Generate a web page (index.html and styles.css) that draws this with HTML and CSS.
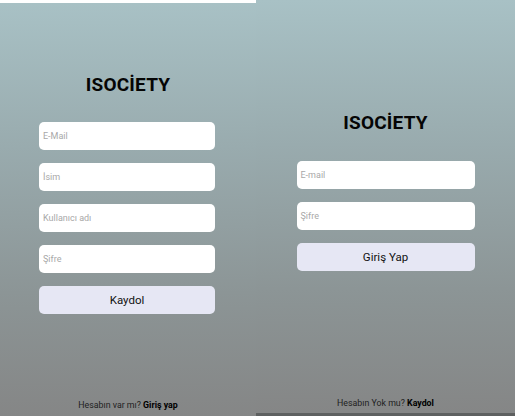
FILE: index.html
```html
<!DOCTYPE html>
<html>
<head>
<meta charset="utf-8">
<link rel="stylesheet" href="styles.css">
</head>
<body>
<div class="screens">
  <div class="col col-left">
    <div class="topbar"></div>
    <div class="panel panel-left">
      <h1 class="title">ISOCİETY</h1>
      <div class="form">
        <div class="field">E-Mail</div>
        <div class="field">İsim</div>
        <div class="field">Kullanıcı adı</div>
        <div class="field">Şifre</div>
        <div class="btn">Kaydol</div>
      </div>
      <div class="spacer"></div>
      <p class="footer">Hesabın var mı? <b>Giriş yap</b></p>
    </div>
  </div>
  <div class="col col-right">
    <div class="panel panel-right">
      <h1 class="title">ISOCİETY</h1>
      <div class="form">
        <div class="field">E-mail</div>
        <div class="field">Şifre</div>
        <div class="btn">Giriş Yap</div>
      </div>
      <div class="spacer"></div>
      <p class="footer">Hesabın Yok mu? <b>Kaydol</b></p>
    </div>
    <div class="bottombar"></div>
  </div>
</div>
</body>
</html>
```
FILE: styles.css
```css
* { box-sizing: border-box; }
html, body { margin: 0; padding: 0; background: #ffffff; }
body { font-family: Roboto, "Liberation Sans", sans-serif; width: 515px; height: 416px; overflow: hidden; }
.screens { display: flex; height: 416px; }
.col { display: flex; flex-direction: column; }
.col-left { width: 256px; }
.col-right { width: 259px; }
.topbar { height: 3px; background: #ffffff; }
.bottombar { height: 3px; background: #5e6060; }
.panel {
  flex: 1;
  display: flex;
  flex-direction: column;
  align-items: center;
  background: linear-gradient(to bottom, #a8c1c5 0%, #99abae 35%, #8c9596 70%, #858686 100%);
}
.title { margin: 0; font-size: 19px; font-weight: 700; color: #050505; line-height: 20px; letter-spacing: 0.2px; }
.panel-left .title { margin-top: 72px; }
.panel-right .title { margin-top: 113px; }
.form { display: flex; flex-direction: column; gap: 13px; margin-top: 27px; }
.panel-left .form { width: 176px; margin-right: 2px; }
.panel-right .form { width: 178px; margin-top: 28px; }
.field {
  height: 28px;
  background: #ffffff;
  border-radius: 5px;
  font-size: 9px;
  color: #a8a8a8;
  padding-left: 4px;
  display: flex;
  align-items: center;
}
.btn {
  height: 28px;
  background: #e6e7f4;
  border-radius: 5px;
  font-size: 11.5px;
  color: #111;
  display: flex;
  align-items: center;
  justify-content: center;
}
.spacer { flex: 1; }
.footer { margin: 0; font-size: 8.8px; color: #1e1e1e; line-height: 10px; }
.panel-left .footer { margin-bottom: 6px; }
.panel-right .footer { margin-bottom: 5px; }
.footer b { font-weight: 700; color: #000; }
```
